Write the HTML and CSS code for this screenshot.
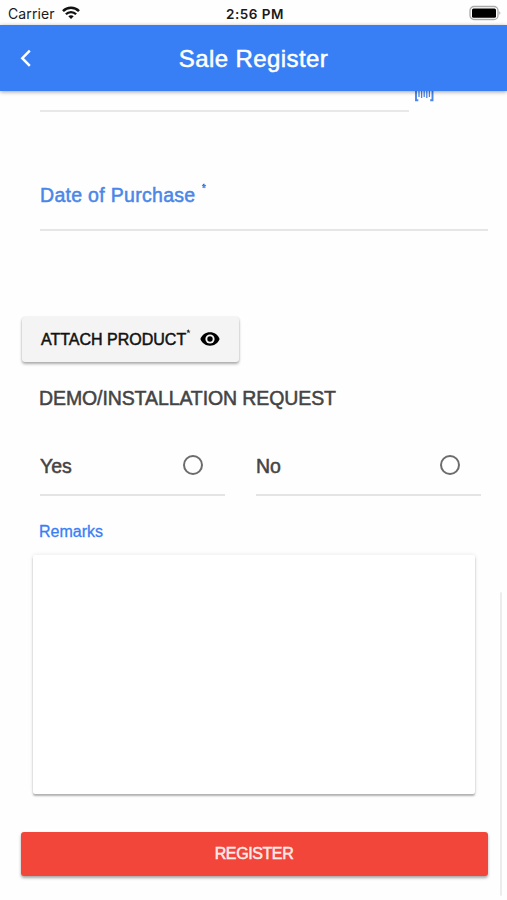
FILE: index.html
```html
<!DOCTYPE html>
<html lang="en">
<head>
<meta charset="utf-8">
<title>Sale Register</title>
<link rel="stylesheet" href="styles.css">
</head>
<body>
<div class="screen">
  <div class="status">
    <div class="carrier"><span>Carrier</span>
      <svg width="18" height="14" viewBox="0 0 18 14" fill="none" stroke="#111"><path d="M1 5.100C5.400 .6 12.600 .6 17 5.100" stroke-width="2.500"/><path d="M3.900 8.200C6.600 5.300 11.400 5.300 14.100 8.200" stroke-width="2.300"/><path d="M9 13 6.300 10.200C7.700 8.900 10.300 8.900 11.700 10.200Z" fill="#111" stroke="none"/></svg>
    </div>
    <div class="time">2:56 PM</div>
    <svg class="battery" width="33" height="16" viewBox="0 0 33 16"><rect x="1" y="1.500" width="28" height="13" rx="4" fill="#fff" stroke="#aaa" stroke-width="1.300"/><rect x="3" y="3.500" width="24" height="9.200" rx="1.500" fill="#000"/><path d="M30.500 6Q32.300 8 30.500 10Z" fill="#888"/></svg>
  </div>
  <header class="bar">
    <svg class="back" width="14" height="20" viewBox="0 0 14 20" fill="none" stroke="#fff" stroke-width="2.500"><path d="M10.800 2.600 3.300 10.200 10.800 17.800"/></svg>
    <h1>Sale Register</h1>
  </header>
  <main class="content">
    <div class="scan-row">
      <div class="scan-line"></div>
      <svg width="20" height="11" viewBox="0 0 20 11" fill="none" stroke="#4a86e8"><path d="M2 0V9.200H4.300M18.500 0V9.200H16.200" stroke-width="1.900"/><path d="M5 0V6M7.600 0V7M10.200 0V6M12.800 0V7M15.400 0V6" stroke-width="1.300"/></svg>
    </div>
    <div class="field"><span class="date">Date of Purchase</span><svg class="star" width="6" height="6" viewBox="0 0 6 6" stroke="#4a86e8" stroke-width="1.300"><path d="M3 .8V3L1 2.400M3 3 5 2.400M3 3 1.800 4.900M3 3 4.200 4.900"/></svg></div>
    <button class="attach"><span class="attach-text">ATTACH PRODUCT</span><svg class="star small" width="5" height="5" viewBox="0 0 6 6" stroke="#222"><path d="M3 .8V3L1 2.400M3 3 5 2.400M3 3 1.800 4.900M3 3 4.200 4.900"/></svg><svg class="eye" width="20" height="14" viewBox="0 0 20 14"><path d="M10 .3C5.600 .3 1.900 3 .4 7c1.500 4 5.200 6.700 9.600 6.700s8.100-2.700 9.600-6.700C18.100 3 14.400 .3 10 .3Z"/><circle cx="10" cy="7" r="4.600" fill="#f4f4f4"/><circle cx="10" cy="7" r="2.700"/></svg></button>
    <h2 class="demo">DEMO/INSTALLATION REQUEST</h2>
    <div class="options">
      <label class="option yes"><span>Yes</span><i class="ring"></i></label>
      <label class="option no"><span>No</span><i class="ring"></i></label>
    </div>
    <div class="remarks">Remarks</div>
    <div class="box"></div>
    <button class="register">REGISTER</button>
  </main>
  <div class="scrollbar"></div>
</div>
</body>
</html>
```
FILE: styles.css
```css
* { box-sizing: border-box; }
body { margin: 0; background: #fff; }
h1, h2 { margin: 0; font-weight: 400; }
button { border: 0; padding: 0; font: inherit; }
svg { display: block; flex: none; }
.screen {
  position: relative;
  width: 507px;
  height: 900px;
  overflow: hidden;
  background: #fefefe;
  font-family: "Liberation Sans", Arial, sans-serif;
  -webkit-text-stroke-width: 0.5px;
}
.status {
  display: grid;
  grid-template-columns: 1fr auto 1fr;
  align-items: center;
  height: 25px;
  padding: 0 5px 0 8px;
  font-family: Inter, sans-serif;
  font-size: 14px;
  color: #1a1a1a;
  -webkit-text-stroke-width: 0;
}
.carrier { display: flex; align-items: center; gap: 7px; padding-top: 2px; letter-spacing: 0.1px; }
.carrier svg { margin-top: -1px; }
.time { font-weight: 600; letter-spacing: 0.5px; padding-top: 2px; font-size: 13.5px; }
.battery { justify-self: end; }
.bar {
  position: relative;
  z-index: 1;
  display: grid;
  grid-template-columns: 20px 1fr 20px;
  align-items: center;
  height: 66px;
  padding: 0 19px;
  background: #387ff5;
  color: #fff;
  box-shadow: 0 1px 4px rgba(0, 0, 0, 0.38);
}
.bar h1 { padding-top: 2px; text-align: center; font-size: 24px; letter-spacing: 0.42px; }
.scan-row { display: flex; height: 20px; padding-left: 40px; gap: 5px; }
.scan-line { width: 369px; height: 21px; border-bottom: 2px solid #e8e8e8; }
.field {
  display: flex;
  height: 55px;
  margin: 65px 19px 0 40px;
  border-bottom: 2px solid #e6e6e6;
  color: #4a86e8;
  font-size: 19.5px;
  line-height: 38px;
}
.date { width: 161px; letter-spacing: 0.3px; white-space: nowrap; }
.star { margin-top: 7px; }
.attach {
  display: flex;
  align-items: center;
  width: 217px;
  height: 45px;
  margin: 86px 0 0 22px;
  padding-left: 19px;
  border-radius: 3px;
  background: #f4f4f4;
  box-shadow: 0 2px 3px rgba(0, 0, 0, 0.32), 0 0 2px rgba(0, 0, 0, 0.1);
  font-size: 16px;
  color: #111;
}
.attach-text { width: 145px; text-align: left; white-space: nowrap; }
.star.small { margin: 0 0 17px; }
.eye { margin: 0 0 2px 9px; }
.demo {
  margin: 23px 0 0 39px;
  font-size: 19.5px;
  line-height: 27px;
  letter-spacing: -0.1px;
  color: #444;
}
.options { display: flex; gap: 31px; height: 60px; margin: 24px 0 0 40px; }
.option {
  display: flex;
  align-items: center;
  justify-content: space-between;
  height: 60px;
  border-bottom: 2px solid #e4e4e4;
  font-size: 19.5px;
  color: #444;
}
.option span { padding-top: 2px; }
.yes { width: 185px; padding-right: 22px; }
.no { width: 225px; padding-right: 21px; }
.ring { width: 20px; height: 20px; border: 2px solid #6c6c6c; border-radius: 50%; }
.remarks {
  margin: 26px 0 0 39px;
  font-size: 16px;
  line-height: 20px;
  color: #387ff5;
  -webkit-text-stroke-width: 0.3px;
}
.box {
  width: 442px;
  height: 239px;
  margin: 13px 0 0 33px;
  border-radius: 2px;
  background: #fff;
  box-shadow: 0 2px 2px rgba(0, 0, 0, 0.28), 0 0 4px rgba(0, 0, 0, 0.1);
}
.register {
  display: block;
  width: 467px;
  height: 44px;
  margin: 38px 0 0 20.5px;
  border-radius: 3px;
  background: #f2463a;
  box-shadow: 0 2px 3px rgba(0, 0, 0, 0.35);
  font-size: 16px;
  letter-spacing: -0.4px;
  color: #ffecea;
}
.scrollbar {
  position: absolute;
  top: 592px;
  right: 5px;
  width: 2px;
  height: 304px;
  border-radius: 1px;
  background: #ececec;
}
```
